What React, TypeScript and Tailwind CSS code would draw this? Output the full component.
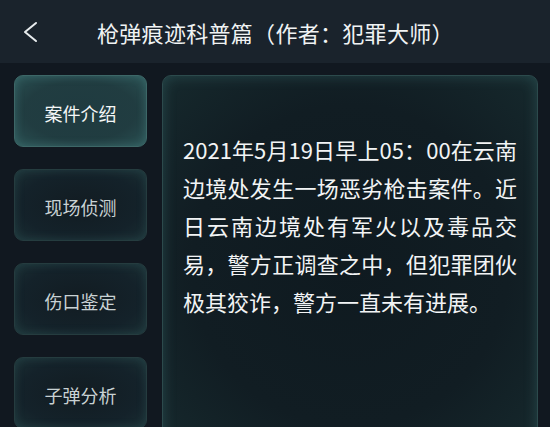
import React from "react";

const tabs = ["案件介绍", "现场侦测", "伤口鉴定", "子弹分析"];

const story =
  "2021年5月19日早上05：00在云南边境处发生一场恶劣枪击案件。近日云南边境处有军火以及毒品交易，警方正调查之中，但犯罪团伙极其狡诈，警方一直未有进展。";

export default function App() {
  const active = 0;

  return (
    <div className="w-[550px] h-[427px] overflow-hidden bg-[#111820] font-['Noto_Sans_CJK_SC','Noto_Sans',sans-serif] text-white">
      {/* 顶栏 */}
      <header className="h-[63px] bg-[#1a232c] flex items-center pl-[22px]">
        <svg width="16" height="22" viewBox="0 0 16 22" fill="none" className="shrink-0">
          <path d="M14 2 L3 11 L14 20" stroke="#e8ecee" strokeWidth="2" strokeLinecap="round" strokeLinejoin="round" />
        </svg>
        <h1 className="ml-[59px] text-[22px] leading-none tracking-[0.3px] text-[#f0f3f4]">
          枪弹痕迹科普篇（作者：犯罪大师）
        </h1>
      </header>

      <main className="flex gap-[15px] pt-[12px] pl-[14px]">
        {/* 左侧标签 */}
        <aside className="w-[133px] flex flex-col gap-[22px] shrink-0">
          {tabs.map((t, i) => (
            <button
              key={t}
              className={`h-[72px] rounded-[9px] border flex items-center justify-center pt-[4px] text-[18px] ${
                i === active
                  ? "border-[#3d6767] bg-[radial-gradient(ellipse_at_center,#1f3b40_0%,#22424760_60%,#2a5052_100%)] bg-[#20393d] text-[#f4f7f7] shadow-[inset_0_0_10px_rgba(90,160,160,0.35)]"
                  : "border-[#253c3f] bg-[radial-gradient(ellipse_at_center,#121c22_0%,#14222a_65%,#1a2e33_100%)] text-[#c9d2d4] shadow-[inset_0_0_10px_rgba(70,130,130,0.25)]"
              }`}
            >
              {t}
            </button>
          ))}
        </aside>

        {/* 内容面板 */}
        <section className="w-[376px] h-[380px] shrink-0 rounded-[9px] border border-[#2c4a4c] bg-[radial-gradient(ellipse_at_center,#0f1a20_0%,#111d23_60%,#16292d_100%)] shadow-[inset_0_0_14px_rgba(80,150,150,0.3)] px-[20px] pt-[54px]">
          <p className="text-[22px] leading-[38px] text-justify text-[#f2f4f5]">{story}</p>
        </section>
      </main>
    </div>
  );
}
